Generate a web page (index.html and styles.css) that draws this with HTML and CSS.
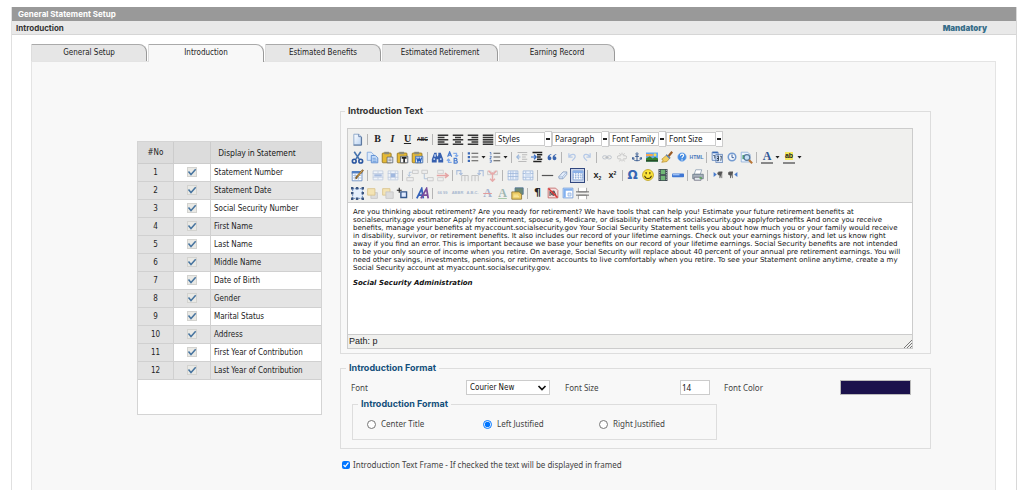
FILE: index.html
```html
<!DOCTYPE html>
<html lang="en">
<head>
<meta charset="utf-8">
<title>General Statement Setup</title>
<link rel="stylesheet" href="styles.css">
</head>
<body>
<svg class="sprite" aria-hidden="true">
<defs>
<linearGradient id="page" x1="0" y1="0" x2="1" y2="1"><stop offset="0" stop-color="#fff"/><stop offset="1" stop-color="#b9d3f2"/></linearGradient>
</defs>
<symbol id="new" viewBox="0 0 16 16"><path d="M3.500 1.500h6l3 3v10h-9z" fill="url(#page)" stroke="#7e9cc4"/><path d="M9.500 1.500v3h3" fill="#dfeaf8" stroke="#52719f"/><path d="M3 15h10V5" fill="none" stroke="#45648f"/></symbol>
<symbol id="left" viewBox="0 0 16 16"><path d="M1 3h14M1 6h9M1 9h14M1 12h9M1 15h14" stroke="#333" stroke-width="1.700"/></symbol>
<symbol id="center" viewBox="0 0 16 16"><path d="M1 3h14M4 6h8M1 9h14M4 12h8M1 15h14" stroke="#333" stroke-width="1.700"/></symbol>
<symbol id="right" viewBox="0 0 16 16"><path d="M1 3h14M6 6h9M1 9h14M6 12h9M1 15h14" stroke="#333" stroke-width="1.700"/></symbol>
<symbol id="full" viewBox="0 0 16 16"><path d="M1 3h14M1 6h14M1 9h14M1 12h14M1 15h14" stroke="#333" stroke-width="1.900"/></symbol>
<symbol id="cut" viewBox="0 0 16 16"><path d="M4 1l6 9M12 1L6 10" stroke="#4774ae" stroke-width="2"/><circle cx="4" cy="12.500" r="2.300" fill="none" stroke="#2a56a0" stroke-width="2"/><circle cx="12" cy="12.500" r="2.300" fill="none" stroke="#2a56a0" stroke-width="2"/></symbol>
<symbol id="copy" viewBox="0 0 16 16"><path d="M1.500 1.500h5l3 3v7h-8z" fill="#dceafb" stroke="#7ea5dc"/><path d="M6.500 5.500h5l3 3v6h-8z" fill="#c5dcf8" stroke="#4e81cb"/><path d="M8 9h4M8 11h5M8 13h5" stroke="#6a99da"/></symbol>
<symbol id="paste" viewBox="0 0 16 16"><rect x="1.500" y="2.500" width="11" height="12" rx="1" fill="#e6ba35" stroke="#8f701e"/><path d="M4 1h6v3H4z" fill="#8d8b78"/><path d="M7.500 7.500h7v7h-7z" fill="#f2f5fa" stroke="#59626e"/><path d="M9 10h4M9 12h4" stroke="#777"/></symbol>
<symbol id="pastetext" viewBox="0 0 16 16"><rect x="1.500" y="2.500" width="12" height="12" rx="1" fill="#e6ba35" stroke="#8f701e"/><path d="M4 1h6v3H4z" fill="#8d8b78"/><path d="M5.500 6.500h9v8h-9z" fill="#f5f5f5" stroke="#4a5568"/><path d="M7 8.500h6M10 8v6" stroke="#222" stroke-width="2"/></symbol>
<symbol id="pasteword" viewBox="0 0 16 16"><rect x="1.500" y="2.500" width="12" height="12" rx="1" fill="#e6ba35" stroke="#8f701e"/><path d="M4 1h6v3H4z" fill="#8d8b78"/><path d="M5.500 6.500h9v8h-9z" fill="#dce9fc" stroke="#3869b4"/><path d="M7 8l1.500 5L10 9l1.500 4L13 8" fill="none" stroke="#285eb8" stroke-width="1.500"/></symbol>
<symbol id="search" viewBox="0 0 16 16"><path d="M4 2h3v3l1 2 1-2V2h3l3 8v4H9v-4H7v4H1v-4z" fill="#365fae"/><path d="M3 10h2M11 10h2M5 4v3" stroke="#b8d0f5" stroke-width="2"/></symbol>
<symbol id="replace" viewBox="0 0 16 16"><path d="M2 7l2.500-6L7 7M3 5h3M10 9v6h2.500a1.500 1.500 0 000-3H10h2a1.500 1.500 0 000-3z" fill="none" stroke="#477bd0" stroke-width="1.400"/><path d="M9 3h4v3m-2-1l2 2 2-2M7 14H3v-4m-2 2l2-2 2 2" fill="none" stroke="#83aceb" stroke-width="1.400"/></symbol>
<symbol id="ul" viewBox="0 0 16 16"><path d="M1 3h3M1 8h3M1 13h3" stroke="#3b68b5" stroke-width="3"/><path d="M6 3h9M6 8h9M6 13h9" stroke="#555" stroke-width="1.500"/></symbol>
<symbol id="ol" viewBox="0 0 16 16"><path d="M1 2h1.500v3M1 7h2v1.500L1 10h2M1 12h2v3H1" fill="none" stroke="#3b68b5"/><path d="M6 3h9M6 8h9M6 13h9" stroke="#555" stroke-width="1.500"/></symbol>
<symbol id="outdent" viewBox="0 0 16 16"><path d="M2 2h13M8 5h7M8 8h5M8 11h7M3 14h11" stroke="#bbb" stroke-width="1.500"/><path d="M6 8H1m3-3L1 8l3 3" fill="none" stroke="#9db8db" stroke-width="1.500"/></symbol>
<symbol id="indent" viewBox="0 0 16 16"><path d="M2 2h13M8 5h7M8 8h5M8 11h7M3 14h11" stroke="#222" stroke-width="2"/><path d="M0 8h6M4 5l3 3-3 3" fill="none" stroke="#316ac5" stroke-width="1.500"/></symbol>
<symbol id="quote" viewBox="0 0 16 16"><path d="M7 3C2 4 1 7 1 10c0 4 6 4 6 0 0-2-1-3-3-3 0-1 1-2 3-3zM15 3c-5 1-6 4-6 7 0 4 6 4 6 0 0-2-1-3-3-3 0-1 1-2 3-3z" fill="#3864ae"/></symbol>
<symbol id="undo" viewBox="0 0 16 16"><path d="M3 2v6h6M4 7c3-5 10-4 9 1-1 3-3 4-5 6" fill="none" stroke="#b5c9e7" stroke-width="2"/></symbol>
<symbol id="redo" viewBox="0 0 16 16"><path d="M13 2v6H7m5-1C9 2 2 3 3 8c1 3 3 4 5 6" fill="none" stroke="#b5c9e7" stroke-width="2"/></symbol>
<symbol id="link" viewBox="0 0 16 16"><rect x="1" y="6" width="7" height="5" rx="2.500" fill="none" stroke="#bbc1cb" stroke-width="1.500"/><rect x="8" y="6" width="7" height="5" rx="2.500" fill="none" stroke="#bbc1cb" stroke-width="1.500"/><path d="M5 8.500h6" stroke="#aaa"/></symbol>
<symbol id="unlink" viewBox="0 0 16 16"><path d="M6 6H3a2 2 0 000 5h3M10 6h3a2 2 0 010 5h-3M8 1v4M8 12v3M4 2l2 3M12 2l-2 3M4 15l2-3M12 15l-2-3" fill="none" stroke="#c3c3c3" stroke-width="1.500"/></symbol>
<symbol id="anchor" viewBox="0 0 16 16"><circle cx="8" cy="3" r="1.700" fill="none" stroke="#385b91" stroke-width="1.400"/><path d="M8 5v9M5 7h6M1 9c1 4 4 5 7 5s6-1 7-5M1 12V9l3 1M15 12V9l-3 1" fill="none" stroke="#385b91" stroke-width="1.600"/></symbol>
<symbol id="image" viewBox="0 0 16 16"><path d="M0 2h16v12H0z" fill="#60a8f2"/><path d="M0 4h9v3H0z" fill="#f5a451"/><path d="M0 10l5-3 4 3 3-2 4 2v4H0z" fill="#33822e"/><path d="M0 12h16v2H0z" fill="#264f27"/><circle cx="12" cy="5" r="2" fill="#f4de57"/></symbol>
<symbol id="cleanup" viewBox="0 0 16 16"><path d="M15 1l-5 6" stroke="#9a5c25" stroke-width="3"/><path d="M8 5l4 4-4 5-7 1 2-3-2-1z" fill="#f1cf62" stroke="#bb9334"/><path d="M7 5l5 5" stroke="#5c80b6" stroke-width="2"/></symbol>
<symbol id="help" viewBox="0 0 16 16"><circle cx="8" cy="8" r="7" fill="#458be0" stroke="#a6c5ef"/><path d="M5.500 6c0-4 6-3 5 0-.5 1.500-2.500 1.500-2.500 4M8 11.500v2" fill="none" stroke="#fff" stroke-width="1.800"/></symbol>
<symbol id="date" viewBox="0 0 16 16"><path d="M1.500 1.500h8v11h-8zM6.500 4.500h9v11h-9z" fill="#dfebfc" stroke="#5377b0"/><path d="M2 2h7" stroke="#3869b4" stroke-width="2"/><path d="M3 6h2v4M8 7h2v3H8h2v3H8M12 7h2l-1 6" fill="none" stroke="#234"/></symbol>
<symbol id="time" viewBox="0 0 16 16"><circle cx="8" cy="8" r="6" fill="#f4f8fd" stroke="#749bd0" stroke-width="2.500"/><path d="M8 4v5h3" fill="none" stroke="#345b98" stroke-width="1.500"/></symbol>
<symbol id="preview" viewBox="0 0 16 16"><path d="M1.500 1.500h8l3 3v9h-11z" fill="#ebf3fd" stroke="#8bacd7"/><path d="M3 5h3v5H3z" fill="#48a267"/><circle cx="8.500" cy="8" r="3.500" fill="#c5e0f6" stroke="#54789b" stroke-width="1.500"/><path d="M11 11l4 4" stroke="#b97737" stroke-width="2.500"/></symbol>
<symbol id="tableedit" viewBox="0 0 16 16"><path d="M1.500 3.500h12v11h-12z" fill="#fff" stroke="#5f84bd"/><path d="M1 4h13" stroke="#507fc5" stroke-width="3"/><path d="M2 8h11M2 11h11M5 5v9M9 5v9" stroke="#a3bddf"/><path d="M15 1L7 10l-1 2" stroke="#86612d" stroke-width="2.500" fill="none"/><path d="M14 2L8 9" stroke="#efbb57"/></symbol>
<symbol id="rowprops" viewBox="0 0 16 16"><path d="M1.500 2.500h13v12h-13zM1 6h14M1 11h14M8 3v3M8 11v3" fill="#f0f4fa" stroke="#bccadd"/><path d="M3 8.500h10" stroke="#a8bddf" stroke-width="3"/></symbol>
<symbol id="cellprops" viewBox="0 0 16 16"><path d="M1.500 2.500h13v12h-13zM1 6h14M1 11h14M5 3v11M11 3v11" fill="#f0f4fa" stroke="#bccadd"/><path d="M5 6h6v5H5z" fill="#a0b8df"/></symbol>
<symbol id="rowbefore" viewBox="0 0 16 16"><path d="M8 1.500h7v4H8zM1 10.500h8v4H1z" fill="#eee" stroke="#c5c5c5"/><path d="M7 4H4v5m-2-2l2 2 2-2" fill="none" stroke="#a6bbd8"/></symbol>
<symbol id="rowafter" viewBox="0 0 16 16"><path d="M1 1.500h7v4H1zM8 10.500h7v4H8z" fill="#eee" stroke="#c5c5c5"/><path d="M4 6v6h4" fill="none" stroke="#a6bbd8"/></symbol>
<symbol id="rowdel" viewBox="0 0 16 16"><path d="M2 1.500h7v4H2zM2 10.500h7v4H2z" fill="#eee" stroke="#ccc"/><path d="M1 8h14m-4-3l4 3-4 3" fill="none" stroke="#e5a4a4" stroke-width="1.800"/></symbol>
<symbol id="colbefore" viewBox="0 0 16 16"><path d="M7 15V8h4v7M11 8h4v7" fill="#eee" stroke="#bbb"/><path d="M1 7V2h5v5M4 5l2 2 2-2" fill="none" stroke="#aabddb" stroke-width="1.300"/></symbol>
<symbol id="colafter" viewBox="0 0 16 16"><path d="M1 15V8h4v7M5 8h4v7" fill="#eee" stroke="#bbb"/><path d="M15 9V2h-5v5M8 5l2 2 2-2" fill="none" stroke="#aabddb" stroke-width="1.300"/></symbol>
<symbol id="coldel" viewBox="0 0 16 16"><path d="M2 2v5h4V2M10 2v5h4V2" fill="#eee" stroke="#c5c5c5"/><path d="M3 2l5 5 5-5M8 4v11M5 12l3 3 3-3" fill="none" stroke="#e6aaaa" stroke-width="1.800"/></symbol>
<symbol id="split" viewBox="0 0 16 16"><path d="M1.500 2.500h13v12h-13zM1 6h14M1 10h14M5 3v11M8 3v11M12 3v11" fill="#edf3fc" stroke="#9bb4d9"/></symbol>
<symbol id="merge" viewBox="0 0 16 16"><path d="M1.500 2.500h13v12h-13zM1 6h14M1 11h14M5 3v11M11 3v11" fill="#edf3fc" stroke="#9bb4d9"/><path d="M4 6h8v5H4z" fill="#d0def1"/></symbol>
<symbol id="hr" viewBox="0 0 16 16"><path d="M1 8h14" stroke="#555" stroke-width="1.500"/></symbol>
<symbol id="eraser" viewBox="0 0 16 16"><path d="M8 3h6v4l-6 7H2l-1-3z" fill="#e4edfa" stroke="#6684b1"/><path d="M1 11h6l7-8M7 11l1 3" fill="none" stroke="#8aa6cd"/></symbol>
<symbol id="grid" viewBox="0 0 16 16"><path d="M1.500 2.500h13v12h-13z" fill="#fff" stroke="#6f94cf"/><path d="M1 4h14" stroke="#8bb1e9" stroke-width="3"/><path d="M1 8h14M1 11h14M5 5v9M8.500 5v9M12 5v9" stroke="#769bd1" stroke-dasharray="2 1"/></symbol>
<symbol id="smile" viewBox="0 0 16 16"><circle cx="8" cy="8" r="7.300" fill="#fbe339" stroke="#b69a16"/><path d="M5.500 4v3M10.500 4v3M3.500 9c1 5 8 5 9 0" fill="none" stroke="#40320b" stroke-width="1.400"/></symbol>
<symbol id="film" viewBox="0 0 16 16"><path d="M2 0h12v16H2z" fill="#3e4650"/><path d="M5 1h6v6H5zM5 9h6v6H5z" fill="#71b877"/><path d="M3.500 1v15M12.500 1v15" stroke="#d9e2e8" stroke-dasharray="1.500 1.500"/></symbol>
<symbol id="advhr" viewBox="0 0 16 16"><rect y="6" width="16" height="5" rx="1" fill="#3f77d4"/><path d="M1 7.500h9" stroke="#9cc0f5" stroke-width="2"/></symbol>
<symbol id="print" viewBox="0 0 16 16"><path d="M5 1h8l-2 6H3z" fill="#fff" stroke="#8798ad"/><path d="M1 7h14v6H1z" fill="#a8b2bd" stroke="#60707f"/><path d="M3 11h9v4H3z" fill="#e3e9ef" stroke="#667"/><path d="M10 12h3" stroke="#55ac4e" stroke-width="2"/></symbol>
<symbol id="ltr" viewBox="0 0 16 16"><path d="M1 3l5 4-5 4z" fill="#477bcc"/><path d="M15 3h-5a2 2 0 000 5h1v5M14 3v10" fill="#555" stroke="#555" stroke-width="1.200"/></symbol>
<symbol id="rtl" viewBox="0 0 16 16"><path d="M15 3l-5 4 5 4z" fill="#477bcc"/><path d="M8 3H3a2 2 0 000 5h1v5M7 3v10" fill="#555" stroke="#555" stroke-width="1.200"/></symbol>
<symbol id="layer" viewBox="0 0 16 16"><path d="M2 2h12v12H2z" fill="#e5effc" stroke="#4d76b8" stroke-dasharray="2 1"/><path d="M0 0h3v3H0zM6 0h3v3H6zM13 0h3v3h-3zM0 13h3v3H0zM6 13h3v3H6zM13 13h3v3h-3zM0 6h3v3H0zM13 6h3v3h-3z" fill="#3c5680"/></symbol>
<symbol id="forward" viewBox="0 0 16 16"><path d="M6 7h8v7H6z" fill="#ddd" stroke="#c5c5c5"/><path d="M2 2h9v8H2z" fill="#f4e4b4" stroke="#d9c38a"/></symbol>
<symbol id="backward" viewBox="0 0 16 16"><path d="M2 2h9v8H2z" fill="#f4e4b4" stroke="#d9c38a"/><path d="M6 6h9v8H6z" fill="#ddd" stroke="#c5c5c5"/></symbol>
<symbol id="absolute" viewBox="0 0 16 16"><path d="M6 6h7v7H6z" fill="#dfeaff" stroke="#35588c" stroke-width="1.700"/><path d="M4 1v6M1 4h6" stroke="#222" stroke-width="1.300"/></symbol>
<symbol id="style" viewBox="0 0 16 16"><path d="M1 14L7 2l2 12M3 10h5" fill="none" stroke="#3462b9" stroke-width="2.200"/><path d="M6 14l7-12 2 12M8 10h6" fill="none" stroke="#7a4c9b" stroke-width="2.200"/></symbol>
<symbol id="attribs" viewBox="0 0 16 16"><path d="M5 1h10v8H5z" fill="#6c8a78" stroke="#4e7196"/><path d="M1 6h9l3 3v6H1z" fill="#eccc64" stroke="#8e742f"/><path d="M3 10h6M3 12h7" stroke="#fff4b8"/></symbol>
<symbol id="nonbreak" viewBox="0 0 16 16"><path d="M1.500 1.500h10l3 3v10h-13z" fill="#f8dede" stroke="#ba5757"/><path d="M4 12V6l3 5V5M9 12V5l3 6" stroke="#444" stroke-width="1.300" fill="none"/><path d="M2 2l12 12" stroke="#dc3333" stroke-width="2"/></symbol>
<symbol id="template" viewBox="0 0 16 16"><path d="M1.500 1.500h13v13h-13z" fill="#fff" stroke="#5d8fd6"/><path d="M2 2h12v3H2zM2 5h3v9H2z" fill="#82b1ef"/><path d="M8 8h4v4H8z" fill="#dbe9fa" stroke="#8dafe0"/></symbol>
<symbol id="pagebreak" viewBox="0 0 16 16"><path d="M3 1v5h10V1M3 15v-5h10v5" fill="#fff" stroke="#999"/><path d="M0 6h16M0 10h16" stroke="#666" stroke-width="1.200"/></symbol>
<symbol id="tick" viewBox="0 0 10 10"><path d="M1.500 4.500l2.500 3L8.700 2.300" fill="none" stroke="#47749f" stroke-width="1.500"/></symbol>
<symbol id="chevron" viewBox="0 0 10 8"><path d="M1.500 2l3.500 3.500L8.500 2" fill="none" stroke="#111" stroke-width="1.700"/></symbol>
</svg>

<main class="window">
  <h1 class="titlebar">General Statement Setup</h1>
  <div class="subbar"><h2>Introduction</h2><strong>Mandatory</strong></div>
  <div class="body">
    <nav class="tabs">
      <button class="tab">General Setup</button>
      <button class="tab active">Introduction</button>
      <button class="tab">Estimated Benefits</button>
      <button class="tab">Estimated Retirement</button>
      <button class="tab">Earning Record</button>
    </nav>
    <section class="panel">
      <div class="listing">
        <table>
          <thead><tr><th class="no">#No</th><th class="chk"></th><th>Display in Statement</th></tr></thead>
          <tbody>
          <tr><td>1</td><td><label class="mark"><input type="checkbox" checked aria-label="Statement Number"><svg><use href="#tick"/></svg></label></td><td>Statement Number</td></tr>
          <tr><td>2</td><td><label class="mark"><input type="checkbox" checked aria-label="Statement Date"><svg><use href="#tick"/></svg></label></td><td>Statement Date</td></tr>
          <tr><td>3</td><td><label class="mark"><input type="checkbox" checked aria-label="Social Security Number"><svg><use href="#tick"/></svg></label></td><td>Social Security Number</td></tr>
          <tr><td>4</td><td><label class="mark"><input type="checkbox" checked aria-label="First Name"><svg><use href="#tick"/></svg></label></td><td>First Name</td></tr>
          <tr><td>5</td><td><label class="mark"><input type="checkbox" checked aria-label="Last Name"><svg><use href="#tick"/></svg></label></td><td>Last Name</td></tr>
          <tr><td>6</td><td><label class="mark"><input type="checkbox" checked aria-label="Middle Name"><svg><use href="#tick"/></svg></label></td><td>Middle Name</td></tr>
          <tr><td>7</td><td><label class="mark"><input type="checkbox" checked aria-label="Date of Birth"><svg><use href="#tick"/></svg></label></td><td>Date of Birth</td></tr>
          <tr><td>8</td><td><label class="mark"><input type="checkbox" checked aria-label="Gender"><svg><use href="#tick"/></svg></label></td><td>Gender</td></tr>
          <tr><td>9</td><td><label class="mark"><input type="checkbox" checked aria-label="Marital Status"><svg><use href="#tick"/></svg></label></td><td>Marital Status</td></tr>
          <tr><td>10</td><td><label class="mark"><input type="checkbox" checked aria-label="Address"><svg><use href="#tick"/></svg></label></td><td>Address</td></tr>
          <tr><td>11</td><td><label class="mark"><input type="checkbox" checked aria-label="First Year of Contribution"><svg><use href="#tick"/></svg></label></td><td>First Year of Contribution</td></tr>
          <tr><td>12</td><td><label class="mark"><input type="checkbox" checked aria-label="Last Year of Contribution"><svg><use href="#tick"/></svg></label></td><td>Last Year of Contribution</td></tr>
          </tbody>
        </table>
      </div>

      <form class="settings">
        <fieldset class="textset">
          <legend class="dark">Introduction Text</legend>
          <div class="editor">
            <div class="toolbar">
              <div class="row">
                <button type="button"><svg><use href="#new"/></svg></button><i class="sep"></i>
                <button type="button" class="serif bold">B</button><button type="button" class="serif bold ital">I</button><button type="button" class="serif bold under">U</button><button type="button" class="abc">ABC</button><i class="sep"></i>
                <button type="button"><svg class="small"><use href="#left"/></svg></button><button type="button"><svg class="small"><use href="#center"/></svg></button><button type="button"><svg class="small"><use href="#right"/></svg></button><button type="button"><svg class="small"><use href="#full"/></svg></button>
                <span class="combo"><select aria-label="Styles"><option>Styles</option></select></span>
                <span class="combo"><select aria-label="Paragraph"><option>Paragraph</option></select></span>
                <span class="combo"><select aria-label="Font Family"><option>Font Family</option></select></span>
                <span class="combo"><select aria-label="Font Size"><option>Font Size</option></select></span>
              </div>
              <div class="row">
                <button type="button"><svg><use href="#cut"/></svg></button><button type="button"><svg><use href="#copy"/></svg></button><button type="button"><svg><use href="#paste"/></svg></button><button type="button"><svg><use href="#pastetext"/></svg></button><button type="button"><svg><use href="#pasteword"/></svg></button><i class="sep"></i>
                <button type="button"><svg><use href="#search"/></svg></button><button type="button"><svg><use href="#replace"/></svg></button><i class="sep"></i>
                <button type="button"><svg class="small"><use href="#ul"/></svg></button><i class="arrow"></i><button type="button"><svg class="small"><use href="#ol"/></svg></button><i class="arrow"></i><i class="sep"></i>
                <button type="button"><svg class="small"><use href="#outdent"/></svg></button><button type="button"><svg class="small"><use href="#indent"/></svg></button><button type="button"><svg class="tight"><use href="#quote"/></svg></button><i class="sep"></i>
                <button type="button"><svg class="tight"><use href="#undo"/></svg></button><button type="button"><svg class="tight"><use href="#redo"/></svg></button><i class="sep"></i>
                <button type="button"><svg class="tight"><use href="#link"/></svg></button><button type="button"><svg class="tight"><use href="#unlink"/></svg></button><button type="button"><svg class="tight"><use href="#anchor"/></svg></button><button type="button"><svg class="small"><use href="#image"/></svg></button><button type="button"><svg class="small"><use href="#cleanup"/></svg></button><button type="button"><svg class="tight"><use href="#help"/></svg></button><button type="button" class="html">HTML</button><i class="sep"></i>
                <button type="button"><svg class="small"><use href="#date"/></svg></button><button type="button"><svg class="tight"><use href="#time"/></svg></button><button type="button"><svg><use href="#preview"/></svg></button><i class="sep"></i>
                <button type="button" class="serif forecolor">A</button><i class="arrow"></i><button type="button" class="backcolor"><span>ab</span></button><i class="arrow"></i>
              </div>
              <div class="row">
                <button type="button"><svg><use href="#tableedit"/></svg></button><i class="sep"></i>
                <button type="button"><svg class="small"><use href="#rowprops"/></svg></button><button type="button"><svg class="small"><use href="#cellprops"/></svg></button><i class="sep"></i>
                <button type="button"><svg><use href="#rowbefore"/></svg></button><button type="button"><svg><use href="#rowafter"/></svg></button><button type="button"><svg><use href="#rowdel"/></svg></button><i class="sep"></i>
                <button type="button"><svg><use href="#colbefore"/></svg></button><button type="button"><svg><use href="#colafter"/></svg></button><button type="button"><svg><use href="#coldel"/></svg></button><i class="sep"></i>
                <button type="button"><svg class="small"><use href="#split"/></svg></button><button type="button"><svg class="small"><use href="#merge"/></svg></button><i class="sep"></i>
                <button type="button"><svg><use href="#hr"/></svg></button><button type="button"><svg class="tight"><use href="#eraser"/></svg></button><button type="button" class="on"><svg class="small"><use href="#grid"/></svg></button><i class="sep"></i>
                <button type="button" class="script">x<sub>2</sub></button><button type="button" class="script">x<sup>2</sup></button><i class="sep"></i>
                <button type="button" class="omega">Ω</button><button type="button"><svg class="small"><use href="#smile"/></svg></button><button type="button"><svg class="small"><use href="#film"/></svg></button><button type="button"><svg class="small"><use href="#advhr"/></svg></button><i class="sep"></i>
                <button type="button"><svg class="small"><use href="#print"/></svg></button><i class="sep"></i>
                <button type="button"><svg class="tight"><use href="#ltr"/></svg></button><button type="button"><svg class="tight"><use href="#rtl"/></svg></button>
              </div>
              <div class="row">
                <button type="button"><svg><use href="#layer"/></svg></button><button type="button"><svg><use href="#forward"/></svg></button><button type="button"><svg><use href="#backward"/></svg></button><button type="button"><svg><use href="#absolute"/></svg></button><i class="sep"></i>
                <button type="button"><svg><use href="#style"/></svg></button><i class="sep"></i>
                <button type="button" class="tiny">66 99</button><button type="button" class="tiny">ABBR</button><button type="button" class="tiny">A.B.C.</button><button type="button" class="serif dim del">A</button><button type="button" class="serif dim ins">A</button><button type="button"><svg><use href="#attribs"/></svg></button><i class="sep"></i>
                <button type="button" class="pilcrow">¶</button><button type="button"><svg class="small"><use href="#nonbreak"/></svg></button><button type="button"><svg class="small"><use href="#template"/></svg></button><button type="button"><svg><use href="#pagebreak"/></svg></button>
              </div>
            </div>
            <div class="content" contenteditable="true" spellcheck="false" role="textbox" aria-label="Introduction Text">
              <p>Are you thinking about retirement? Are you ready for retirement? We have tools that can help you! Estimate your future retirement benefits at socialsecurity.gov estimator Apply for retirement, spouse s, Medicare, or disability benefits at socialsecurity.gov applyforbenefits And once you receive benefits, manage your benefits at myaccount.socialsecurity.gov Your Social Security Statement tells you about how much you or your family would receive in disability, survivor, or retirement benefits. It also includes our record of your lifetime earnings. Check out your earnings history, and let us know right away if you find an error. This is important because we base your benefits on our record of your lifetime earnings. Social Security benefits are not intended to be your only source of income when you retire. On average, Social Security will replace about 40 percent of your annual pre retirement earnings. You will need other savings, investments, pensions, or retirement accounts to live comfortably when you retire. To see your Statement online anytime, create a my Social Security account at myaccount.socialsecurity.gov.</p>
              <p><strong><em>Social Security Administration</em></strong></p>
            </div>
            <div class="status"><span>Path: p</span><svg class="grip" viewBox="0 0 8 8"><path d="M0 8l8-8M3 8l5-5M6 8l2-2" stroke="#777" fill="none"/></svg></div>
          </div>
        </fieldset>

        <fieldset class="format">
          <legend>Introduction Format</legend>
          <div class="fields">
            <label for="font">Font</label>
            <span class="picker"><select id="font"><option>Courier New</option></select><svg><use href="#chevron"/></svg></span>
            <label for="size">Font Size</label>
            <input id="size" class="size" type="text" value="14">
            <label for="color">Font Color</label>
            <input id="color" class="color" type="color" value="#1b124c">
          </div>
          <fieldset class="align">
            <legend>Introduction Format</legend>
            <div class="choices">
              <label><input type="radio" name="align"><span>Center Title</span></label>
              <label><input type="radio" name="align" checked><span>Left Justified</span></label>
              <label><input type="radio" name="align"><span>Right Justified</span></label>
            </div>
          </fieldset>
        </fieldset>
        <label class="frame"><input type="checkbox" checked><span>Introduction Text Frame - If checked the text will be displayed in framed</span></label>
      </form>
    </section>
  </div>
</main>
</body>
</html>
```
FILE: styles.css
```css
* { box-sizing: border-box; }
body { margin: 0; padding: 7px 7px 0 11px; background: #fff; color: #444; font: 8px/12px "Noto Sans", sans-serif; overflow: hidden; }
.sprite { position: absolute; width: 0; height: 0; }
button, input, select { margin: 0; padding: 0; border: 0; background: none; color: inherit; font: inherit; }
h1, h2, p { margin: 0; font-size: inherit; }
fieldset { margin: 0; min-width: 0; border: 1px solid #ddd; }

.window { min-height: 483px; border-left: 1px solid #e0e0e0; border-right: 1px solid #d8d8d8; }
.titlebar { height: 14px; padding-left: 6px; background: #999; color: #fff; font: bold 8px/14px Inter, sans-serif; }
.subbar { display: flex; justify-content: space-between; height: 14px; padding: 0 29px 0 4px; background: #e9e9e9; border-bottom: 1px solid #d6d6d6; color: #333; font: bold 8px/14px Inter, sans-serif; }
.subbar strong { color: #376e8a; }
.body { padding: 9px 20px 0 19px; }

.tabs { display: flex; gap: 1px; height: 17px; }
.tab { width: 116px; background: #e6e6e6; border: 1px solid #ddd; border-top-color: #aaa; border-right: 1px solid #999; border-bottom: 0; border-radius: 0 8px 0 0; color: #222; font: 8px/16px "DejaVu Sans Condensed", "DejaVu Sans", sans-serif; }
.tab.active { height: 18px; background: #f8f8f8; padding-bottom: 1px; }
.panel { display: grid; grid-template-columns: 185px 1fr; gap: 18px; align-items: start; min-height: 440px; padding: 43px 64px 0 105px; background: #f8f8f8; border: 1px solid #e4e4e4; }
.tabs { position: relative; }

.listing { margin-top: 36px; padding-bottom: 34px; background: #fff; border: 1px solid #d4d4d4; }
table { width: 100%; table-layout: fixed; border-spacing: 0; color: #222; font: 8px/10px "DejaVu Sans Condensed", "DejaVu Sans", sans-serif; }
th { height: 22px; padding: 0; background: #dcdcdc; border: solid #ccc; border-width: 0 1px 1px 0; font-weight: 400; }
th:last-child { padding-right: 18px; border-right: 0; font: 8px/10px "Noto Sans", sans-serif; }
.no { width: 36px; }
.chk { width: 37px; }
td { height: 18px; padding: 0; border: solid #d0d0d0; border-width: 0 1px 1px 0; text-align: center; }
td:first-child { background: #e2e2e2; }
td:last-child { padding-left: 3px; border-right: 0; text-align: left; }
tbody tr:nth-child(even) { background: #e4e4e4; }
.mark { display: inline-grid; width: 10px; height: 10px; vertical-align: middle; }
.mark input, .mark svg { grid-area: 1 / 1; width: 10px; height: 10px; }
.mark input { appearance: none; background: #e9e9e5; border: 1px solid #d3d3d0; }

.textset { padding: 11px 17px 4px 6px; }
legend { margin-left: 5px; padding: 0 3px; color: #134f7b; font: bold 9px/12px Inter, sans-serif; }
.textset legend { margin-left: -2px; }
legend.dark { color: #333; }
.editor { border: 1px solid #ccc; }
.toolbar { height: 74px; background: #f0f0ee; border-bottom: 1px solid #ccc; padding: 1px 0 0 2px; }
.row { display: flex; align-items: center; height: 18px; }
.row button { display: flex; align-items: center; justify-content: center; flex: none; width: 15px; height: 15px; color: #222; }
.row svg { width: 13px; height: 13px; }
.row svg.small { width: 12px; height: 12px; }
.row svg.tight { width: 10px; height: 10px; }
.sep { flex: none; width: 1px; height: 11px; margin: 0 2px; background: #b5b5b5; }
.arrow { flex: none; width: 5px; height: 3px; margin: 0 1px; background: #222; clip-path: polygon(0 0, 100% 0, 50% 100%); }
.row .serif { font: 10px/12px "Liberation Serif", serif; }
.row .bold { font-weight: bold; }
.row .ital { font-style: italic; }
.row .under { text-decoration: underline; }
.row .abc { font: bold 5px/8px "Liberation Sans", sans-serif; text-decoration: line-through; }
.row .html { color: #4a79bd; font: bold 5px/8px "Liberation Sans", sans-serif; }
.row .tiny { color: #a9b9d0; font: bold 4px/8px "Liberation Sans", sans-serif; white-space: nowrap; }
.row .forecolor { width: 12px; height: 13px; margin: 0 1px 0 2px; border-bottom: 2px solid #888; color: #315796; font-weight: bold; font-size: 12px; line-height: 10px; }
.row .backcolor { width: 12px; height: 13px; margin: 0 1px 0 2px; border-bottom: 2px solid #888; font: bold 7px/8px "Liberation Sans", sans-serif; }
.backcolor span { background: #f3e85c; }
.row .on { background: #cad5ea; border: 1px solid #31477e; }
.row .script { font: bold 9px/10px "Liberation Sans", sans-serif; }
.script sub, .script sup { font-size: 5px; line-height: 5px; }
.script sub { align-self: end; padding-bottom: 2px; }
.script sup { align-self: start; padding-top: 3px; }
.row .omega { color: #3566b5; font: bold 12px/13px "DejaVu Sans", sans-serif; }
.row .pilcrow { font: bold 11px/12px "DejaVu Sans", sans-serif; }
.row .dim { color: #9eb6b2; font-size: 12px; font-weight: bold; }
.row .del { color: #a8b4cf; text-decoration: line-through #e29b9b; }
.row .ins { text-decoration: underline #a9c9a9; }
.combo { display: flex; align-items: center; flex: none; width: 57px; height: 14px; }
.combo select { appearance: none; width: 50px; height: 14px; padding-left: 2px; background: #fff; border: 1px solid #ccc; color: #222; font: 8px/12px "Noto Sans", sans-serif; }
.combo::after { content: ""; width: 6px; height: 14px; background: linear-gradient(#222, #222) 50% 50% / 4px 2px no-repeat #fff; border: solid #ccc; border-width: 1px 1px 1px 0; }
.content { height: 131px; padding: 5px 8px 0 5px; background: #fff; color: #111; font: 7px/8px "DejaVu Sans", sans-serif; outline: 0; }
.content p { margin: 0 0 7px; }
.status { display: flex; align-items: end; justify-content: space-between; height: 14px; padding-left: 1px; background: #f0f0ee; border-top: 1px solid #ccc; color: #222; font: 9px/13px "Liberation Sans", sans-serif; }
.grip { width: 8px; height: 8px; }

.format { margin-top: 8px; padding: 5px 19px 8px 10px; }
.format legend { margin-left: -5px; }
.fields { display: grid; grid-template-columns: 115px 99px 115px 44px 116px 71px; align-items: center; height: 17px; margin-bottom: 2px; }
.picker { position: relative; display: flex; width: 84px; }
.picker select { appearance: none; width: 100%; height: 15px; padding-left: 3px; background: #fff; border: 1px solid #ccc; color: #111; font: 8px/12px "DejaVu Sans Condensed", "DejaVu Sans", sans-serif; }
.picker svg { position: absolute; right: 3px; top: 4px; width: 10px; height: 8px; pointer-events: none; }
.size { width: 30px; height: 15px; padding-left: 1px; background: #fff; border: 1px solid #ccc; color: #111; }
.color { appearance: none; width: 71px; height: 15px; border: 1px solid #bbb; }
.color::-webkit-color-swatch-wrapper { padding: 0; }
.color::-webkit-color-swatch { border: 0; border-radius: 0; }
.align { width: 365px; margin-left: 1px; padding: 8px 14px 9px; }
.format .align legend { margin-left: -9px; }
.choices { display: grid; grid-template-columns: 116px 116px 1fr; }
.choices label, .frame { display: flex; align-items: center; }
.choices input { width: 9px; height: 9px; margin-right: 5px; accent-color: #0075ff; }
.frame { margin-top: 10px; padding-left: 2px; }
.frame input { width: 8px; height: 8px; margin-right: 3px; accent-color: #0075ff; }
```
